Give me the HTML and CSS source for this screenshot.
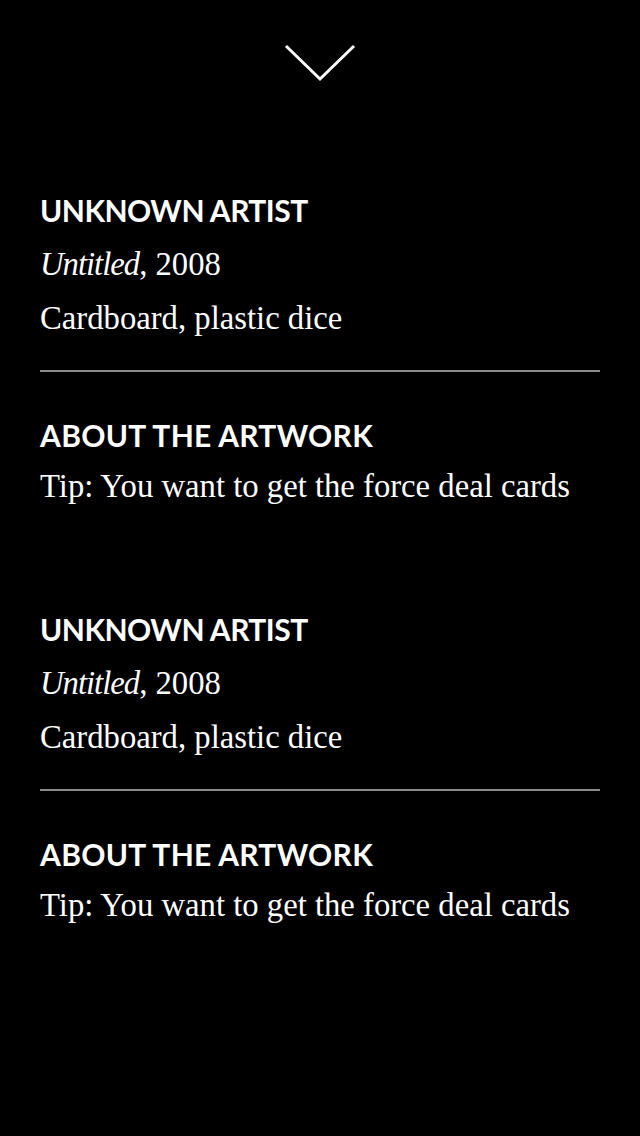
FILE: index.html
```html
<!DOCTYPE html>
<html>
<head>
<meta charset="utf-8">
<link rel="stylesheet" href="styles.css">
</head>
<body>
<div class="page">
  <div class="top">
    <svg class="chevron" width="72" height="40" viewBox="0 0 72 40">
      <polyline points="2,2 36,35 70,2" fill="none" stroke="#fff" stroke-width="3"/>
    </svg>
  </div>
  <section class="artwork">
    <h2 class="heading">UNKNOWN ARTIST</h2>
    <p class="line"><em>Untitled</em>, 2008</p>
    <p class="line">Cardboard, plastic dice</p>
    <hr class="rule">
    <h2 class="heading about">ABOUT THE ARTWORK</h2>
    <p class="line tip">Tip: You want to get the force deal cards</p>
  </section>
  <section class="artwork second">
    <h2 class="heading">UNKNOWN ARTIST</h2>
    <p class="line"><em>Untitled</em>, 2008</p>
    <p class="line">Cardboard, plastic dice</p>
    <hr class="rule">
    <h2 class="heading about">ABOUT THE ARTWORK</h2>
    <p class="line tip">Tip: You want to get the force deal cards</p>
  </section>
</div>
</body>
</html>
```
FILE: styles.css
```css
html, body {
  margin: 0;
  padding: 0;
  background: #000;
  color: #fff;
}
.page {
  width: 640px;
  min-height: 1136px;
  padding: 0 40px;
  box-sizing: border-box;
}
.top {
  display: flex;
  justify-content: center;
  padding-top: 44px;
}
.chevron {
  display: block;
}
.artwork {
  margin-top: 111px;
}
.artwork.second {
  margin-top: 101px;
}
.heading {
  margin: 0;
  font-family: Lato, "Liberation Sans", sans-serif;
  font-weight: 700;
  font-size: 30px;
  line-height: 30px;
  letter-spacing: -0.5px;
}
.heading.about {
  letter-spacing: 0.3px;
}
.heading + .line {
  margin-top: 12px;
}
.line {
  margin: 0;
  font-family: "Liberation Serif", serif;
  font-size: 32.7px;
  line-height: 54px;
}
.line em {
  font-style: italic;
  letter-spacing: -1px;
}
.rule {
  margin: 25px 0 0;
  border: none;
  height: 2px;
  background: #8a8a8a;
}
.heading.about {
  margin-top: 48px;
}
.heading.about + .tip {
  margin-top: 9px;
}
```
